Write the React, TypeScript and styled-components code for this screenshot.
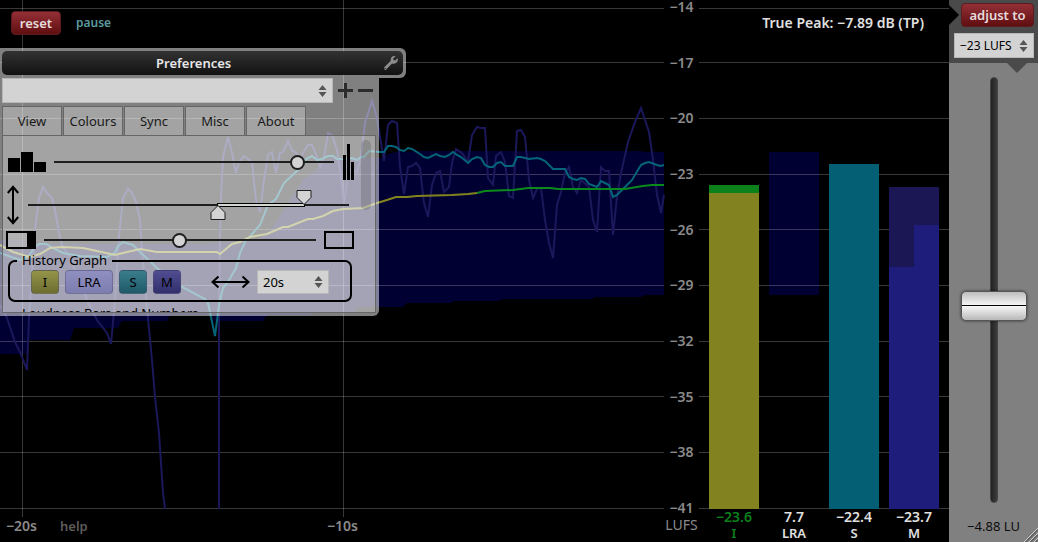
import React, { useState } from "react";
import styled, { createGlobalStyle } from "styled-components";

const GlobalStyle = createGlobalStyle`
  * { box-sizing: border-box; }
  body {
    margin: 0;
    background: #000;
    font-family: "Noto Sans", "Open Sans", sans-serif;
    font-size: 13px;
    line-height: 16px;
  }
  button, select, input { font: inherit; margin: 0; }
  svg { display: block; }
`;

const FOOTER = "33px";

const Window = styled.main`
  display: flex;
  height: 100vh;
  overflow: hidden;
  background: #000;
  color: #e0e0e0;
`;

const HistoryColumn = styled.section`
  position: relative;
  flex: 1;
  min-width: 0;
  display: flex;
  flex-direction: column;
`;

const PlotArea = styled.div`
  position: relative;
  flex: 1;
  min-height: 0;
  svg { width: 100%; height: 100%; overflow: visible; }
`;

const TimeAxis = styled.footer`
  height: ${FOOTER};
  display: grid;
  grid-template-columns: 54px 267px 1fr;
  align-items: center;
  padding-left: 6px;
  color: #8a8a8a;
  font-size: 14px;
  font-weight: 600;
`;

const HelpButton = styled.button`
  justify-self: start;
  border: 0;
  padding: 0;
  background: none;
  color: #5c5c5c;
  font-size: 13px;
  font-weight: 600;
`;

const AxisColumn = styled.section`
  width: 35px;
  display: flex;
  flex-direction: column;
  align-items: center;
  color: #8a8a8a;
  font-size: 14px;
`;

const Scale = styled.div`
  flex: 1;
  min-height: 0;
  margin-bottom: -6px;
  display: flex;
  flex-direction: column;
  justify-content: space-between;
  font-weight: 600;
  line-height: 14px;
`;

const Unit = styled.div`
  height: ${FOOTER};
  line-height: 32px;
`;

const MeterColumn = styled.section`
  position: relative;
  width: 250px;
  display: flex;
  flex-direction: column;
`;

const Readouts = styled.footer`
  height: ${FOOTER};
  display: flex;
  gap: 10px;
  padding: 0 10px;
`;

const Readout = styled.div<{ $color?: string }>`
  flex: 1;
  display: flex;
  flex-direction: column;
  align-items: center;
  font-weight: 600;
  color: ${(p) => p.$color ?? "#e0e0e0"};
`;

const Reading = styled.span`
  font-size: 14px;
`;

const TruePeak = styled.div`
  position: absolute;
  top: 15px;
  right: 25px;
  font-size: 14px;
  font-weight: 600;
  white-space: nowrap;
`;

const Toolbar = styled.div`
  position: absolute;
  z-index: 1;
  top: 11px;
  left: 11px;
  display: flex;
  align-items: center;
  gap: 15px;
`;

const RedButton = styled.button<{ $width: string }>`
  width: ${(p) => p.$width};
  height: 24px;
  padding: 0;
  border: 1px solid #5a1c1e;
  border-radius: 4px;
  background: linear-gradient(#933036, #600e11);
  color: #e6dcdc;
  font-weight: 600;
  line-height: 20px;
`;

const TextButton = styled.button`
  border: 0;
  padding: 0;
  background: none;
  color: #5b9a9e;
  font-size: 12px;
  font-weight: 600;
`;

/* Preferences window */

const Preferences = styled.aside`
  position: absolute;
  top: 48px;
  left: 0;
  color: #000;
`;

const TitleFrame = styled.div`
  width: 406px;
  padding: 3px 3px 3px 2px;
  border-radius: 0 6px 6px 0;
  background: rgba(255, 255, 255, 0.5);
`;

const TitleBar = styled.header`
  position: relative;
  height: 24px;
  display: flex;
  align-items: center;
  padding: 0 4px 0 154px;
  justify-content: space-between;
  border-radius: 5px;
  background: linear-gradient(rgba(48, 48, 48, 0.97), rgba(14, 14, 14, 0.97));
  color: #e6e6e6;
  font-weight: 600;
`;

const PrefsBody = styled.div`
  width: 379px;
  padding: 0 3px 3px 2px;
  border-radius: 0 0 6px 0;
  background: rgba(255, 255, 255, 0.5);
`;

const PresetRow = styled.div`
  display: flex;
  align-items: center;
  gap: 5px;
  height: 25px;
`;

const IconButton = styled.button`
  width: 15px;
  height: 15px;
  padding: 0;
  border: 0;
  background: none;
`;

const SelectBox = styled.span<{ $width: string; $height: string; $size?: string }>`
  position: relative;
  display: inline-block;
  width: ${(p) => p.$width};
  height: ${(p) => p.$height};
  font-size: ${(p) => p.$size ?? "13px"};
  select {
    appearance: none;
    display: block;
    width: 100%;
    height: 100%;
    padding: 0 5px;
    border: 1px solid #b8b8b8;
    border-radius: 0;
    background: #d3d3d3;
    color: #000;
  }
  svg {
    position: absolute;
    right: 6px;
    top: calc(50% - 6px);
    pointer-events: none;
  }
`;

const Tabs = styled.nav`
  display: flex;
  gap: 1px;
  margin-top: 3px;
`;

const Tab = styled.button`
  width: 60px;
  height: 29px;
  padding: 0;
  border: 1px solid #666;
  border-bottom: 0;
  background: rgba(255, 255, 255, 0.28);
  color: #1a1a1a;
`;

const Sheet = styled.div`
  height: 178px;
  display: flex;
  justify-content: space-between;
  align-items: flex-start;
  padding: 4px 4px 0 3px;
  overflow: hidden;
  border: 1px solid #666;
  background: rgba(255, 255, 255, 0.28);
`;

const Settings = styled.div`
  width: 348px;
  padding-top: 4px;
`;

const ScrollThumb = styled.div`
  width: 10px;
  height: 70px;
  border-radius: 5px;
  background: rgba(0, 0, 0, 0.14);
`;

const SliderRow = styled.div<{ $top: string; $inset: string }>`
  display: flex;
  align-items: center;
  gap: 8px;
  margin-top: ${(p) => p.$top};
  padding: ${(p) => p.$inset};
  svg { flex: none; }
`;

const Slider = styled.input`
  appearance: none;
  flex: 1;
  min-width: 0;
  height: 16px;
  background: linear-gradient(#1e1e1e, #1e1e1e) center / 100% 2px no-repeat;
  &::-webkit-slider-thumb {
    appearance: none;
    width: 15px;
    height: 15px;
    border: 2px solid #1e1e1e;
    border-radius: 50%;
    background: #d3d3d3;
  }
`;

const RangeBox = styled.div`
  display: grid;
  flex: 1;
  height: 32px;
  > * { grid-area: 1 / 1; }
`;

const GhostSlider = styled.input`
  width: 100%;
  opacity: 0;
`;

const Group = styled.fieldset`
  margin: 4px 2px 0;
  padding: 0;
  border: 2px solid #000;
  border-radius: 7px;
  legend {
    height: 16px;
    line-height: 14px;
    margin-left: 7px;
    padding: 0 5px;
  }
`;

const GroupRow = styled.div`
  display: flex;
  align-items: center;
  gap: 6px;
  padding: 1px 21px 6px;
  > svg { margin-left: 24px; }
`;

const Swatch = styled.button<{ $width: string; $from: string; $to: string }>`
  width: ${(p) => p.$width};
  height: 24px;
  padding: 0;
  border: 1px solid rgba(80, 80, 110, 0.45);
  border-radius: 4px;
  background: linear-gradient(${(p) => p.$from}, ${(p) => p.$to});
  color: #000;
`;

/* Gain sidebar */

const GainColumn = styled.aside`
  position: relative;
  width: 89px;
  display: flex;
  flex-direction: column;
  align-items: center;
  background: #808080;
  color: #0c0c0c;
`;

const TargetBox = styled.div`
  position: relative;
  width: 100%;
  height: 63px;
  display: flex;
  flex-direction: column;
  align-items: flex-end;
  gap: 6px;
  padding: 3px 4px 0 0;
  background: #4a4a4a;
  &::before, &::after {
    content: "";
    position: absolute;
    border: 10px solid transparent;
  }
  &::before { left: 0; top: 5px; border-left-color: #000; }
  &::after { right: 11px; top: 63px; border-top-color: #4a4a4a; }
`;

const Fader = styled.input`
  appearance: none;
  flex: 1;
  min-height: 0;
  width: 66px;
  margin: 14px 0 6px;
  writing-mode: vertical-lr;
  direction: rtl;
  background: none;
  &::-webkit-slider-runnable-track {
    width: 8px;
    height: 100%;
    border-radius: 4px;
    border: 1px solid #444;
    background: linear-gradient(90deg, #222, #3c3c3c);
  }
  &::-webkit-slider-thumb {
    appearance: none;
    width: 66px;
    height: 30px;
    margin-left: -30px;
    border: 1px solid #555;
    border-radius: 5px;
    background: linear-gradient(#bdbdbd, #f4f4f4 46%, #000 46%, #000 50%, #f8f8f8 50%, #b8b8b8);
    box-shadow: 0 0 3px rgba(0, 0, 0, 0.6);
  }
`;

const GainValue = styled.output`
  height: 33px;
  line-height: 35px;
`;

const Grip = styled.svg`
  position: absolute;
  right: 0;
  bottom: 0;
`;

const GRID = [8, 62, 118, 174, 229, 285, 341, 396, 452, 508];
const LABELS = [14, 17, 20, 23, 26, 29, 32, 35, 38, 41];

const RANGE =
  "0,240 25,240 30,244 200,244 258,240 271,230 288,203 303,180 313,173 322,163 330,158 383,158 388,154 395,152 420,151 640,151 646,152 664,152 " +
  "664,295 645,295 642,297 595,297 592,299 503,299 499,301 454,301 451,303 407,303 403,307 358,307 354,312 313,312 310,315 267,315 263,321 213,321 213,315 170,315 167,321 122,321 118,328 74,328 70,340 29,340 26,354 0,354";

const SHORT_TERM =
  "0,253 20,260 28,257 35,247 39,244 46,244 53,248 63,253 80,256 107,257 115,253 118,246 123,242 133,245 140,252 157,268 182,287 205,299 208,303 215,336 219,305 223,288 228,282 236,268 240,253 245,242 260,225 268,205 276,199 284,183 300,168 306,159 312,156 317,160 322,159 328,156 333,156 337,159 345,159 352,158 357,160 361,157 364,157 369,151 380,152 384,152 388,146 392,146 396,147 400,150 404,151 408,148 412,149 420,154 424,157 428,158 436,154 440,156 445,157 449,155 453,152 457,155 461,157 468,163 472,159 477,157 481,158 485,165 489,167 493,167 497,163 501,162 505,166 513,166 517,157 521,157 529,159 537,158 541,159 545,161 553,169 565,169 569,177 573,179 577,180 581,178 585,179 589,184 597,187 601,181 605,183 609,185 613,197 617,195 625,187 632,180 641,165 645,163 649,162 657,165 661,166 664,165";

const INTEGRATED =
  "0,245 13,252 30,257 40,254 50,248 62,247 83,248 97,251 115,255 127,252 140,249 157,252 217,252 220,254 232,244 240,242 250,237 267,234 283,227 288,227 308,219 313,219 323,216 333,211 343,209 363,208 377,203 387,200 396,197 407,197 417,196 452,195 468,194 477,193";

const ON_TARGET =
  "477,193 485,191 513,190 528,188 550,188 558,189 625,189 643,186 652,185 664,185";

const MOMENTARY =
  "0,305 7,318 15,342 20,352 27,370 29,317 35,230 39,198 43,187 47,193 52,198 55,210 59,233 62,245 70,258 82,287 88,302 97,320 107,333 111,344 115,300 119,237 123,198 128,189 132,193 136,202 140,220 142,250 147,308 152,360 155,397 159,433 161,463 163,493 165,509";

const MOMENTARY_RESUMED =
  "219,509 219,305 220,240 221,197 223,157 228,137 232,153 236,173 239,162 244,156 252,162 256,200 260,212 264,180 268,155 272,152 276,173 280,153 283,152 288,141 292,150 296,153 300,158 303,153 308,145 312,145 316,154 320,167 324,158 328,133 332,135 337,150 340,170 344,205 348,173 352,168 357,173 361,155 365,123 372,101 377,118 380,137 384,161 388,125 392,121 397,123 400,167 404,194 408,167 412,166 416,163 420,168 424,203 428,217 432,185 436,173 440,171 444,192 449,187 452,163 456,149 462,153 468,162 472,135 477,127 481,128 485,128 488,178 493,185 496,156 501,152 505,162 509,196 513,198 517,131 521,130 525,137 529,180 533,198 537,189 541,188 545,220 549,243 553,258 557,205 561,192 565,173 569,167 573,187 577,193 581,180 589,187 593,220 597,232 601,167 605,171 609,171 613,235 617,197 621,173 628,142 635,122 641,108 649,132 653,160 657,195 661,213 664,195";

const HistoryPlot = () => (
  <svg viewBox="0 0 664 509" preserveAspectRatio="none" aria-label="Loudness history">
    <polygon points={RANGE} fill="#000032" />
    <g fill="rgb(255,255,255)" fillOpacity="0.22">
      {GRID.map((y) => (
        <rect key={y} x="0" y={y} width="664" height="1" />
      ))}
      <rect x="22" y="0" width="1" height="517" />
      <rect x="343" y="0" width="1" height="517" />
    </g>
    <g fill="none" strokeWidth="2" strokeLinejoin="miter">
      <polyline points={MOMENTARY} stroke="#1b185c" />
      <polyline points={MOMENTARY_RESUMED} stroke="#1b185c" />
      <polyline points={SHORT_TERM} stroke="#04647a" />
      <polyline points={INTEGRATED} stroke="#84841f" />
      <polyline points={ON_TARGET} stroke="#0b8a1c" />
    </g>
  </svg>
);

const Meters = () => (
  <svg viewBox="0 0 250 509" preserveAspectRatio="none" aria-label="Loudness meters">
    <rect x="70" y="152" width="50" height="143" fill="#000032" />
    <g fill="rgb(255,255,255)" fillOpacity="0.22">
      {GRID.map((y) => (
        <rect key={y} x="0" y={y} width="250" height="1" />
      ))}
    </g>
    <rect x="10" y="185" width="50" height="8" fill="#0b801b" />
    <rect x="10" y="193" width="50" height="316" fill="#828220" />
    <rect x="130" y="164" width="50" height="345" fill="#045e74" />
    <rect x="190" y="187" width="50" height="322" fill="#1a1754" />
    <path d="M190 267H215V225H240V509H190Z" fill="#1f1d7b" />
  </svg>
);

const UpDown = () => (
  <svg width="9" height="12" viewBox="0 0 9 12" fill="#555">
    <path d="M4.5 0L8.5 5H.5ZM4.5 12L8.5 7H.5Z" />
  </svg>
);

const WrenchIcon = () => (
  <svg width="16" height="16" viewBox="0 0 16 16" fill="none">
    <path d="M1.5 14.5L2.6 15.2L9 8.6C11.600 9.400 14.500 8 15 4.500L14.600 3.200L12.200 5.500L10.600 5.100L10.200 3.500L12.500 1.200C10 .3 7.200 2.300 7.800 5.800L1.200 12.300Z" fill="#8c8c8c" />
    <circle cx="2.600" cy="13.500" r=".6" fill="#222" />
  </svg>
);

const RangeSlider = () => {
  const [low, setLow] = useState(190);
  const [high, setHigh] = useState(276);
  return (
    <RangeBox>
      <svg width="321" height="32" viewBox="0 0 321 32">
        <rect y="15" width="321" height="2" fill="#1e1e1e" />
        <rect x={low - 0.5} y="14.500" width={high - low + 1} height="3" fill="#d3d8d3" stroke="#000" />
        <path d={`M${low} 16.500L${low + 7} 23.500V30.500H${low - 7}V23.500Z`} fill="#d3d3d3" stroke="#1e1e1e" />
        <path d={`M${high} 15.500L${high - 7} 8.500V1.500H${high + 7}V8.500Z`} fill="#d3d3d3" stroke="#1e1e1e" />
      </svg>
      <GhostSlider type="range" aria-label="Lowest level" max={321} value={low} onChange={(e) => setLow(Math.min(+e.target.value, high))} />
      <GhostSlider type="range" aria-label="Highest level" max={321} value={high} onChange={(e) => setHigh(Math.max(+e.target.value, low))} />
    </RangeBox>
  );
};

const PreferencesWindow = () => (
  <Preferences>
    <TitleFrame>
      <TitleBar>
        Preferences
        <WrenchIcon />
      </TitleBar>
    </TitleFrame>
    <PrefsBody>
      <PresetRow>
        <SelectBox $width="331px" $height="25px">
          <select aria-label="Preset">
            <option></option>
          </select>
          <UpDown />
        </SelectBox>
        <IconButton aria-label="Add preset">
          <svg width="15" height="15" viewBox="0 0 15 15" fill="#2c2c2c">
            <path d="M6 0h3v6h6v3h-6v6h-3v-6h-6v-3h6z" />
          </svg>
        </IconButton>
        <IconButton aria-label="Remove preset">
          <svg width="15" height="15" viewBox="0 0 15 15" fill="#2c2c2c">
            <path d="M0 6h15v3h-15z" />
          </svg>
        </IconButton>
      </PresetRow>
      <Tabs>
        {["View", "Colours", "Sync", "Misc", "About"].map((t) => (
          <Tab key={t}>{t}</Tab>
        ))}
      </Tabs>
      <Sheet>
        <Settings>
          <SliderRow $top="0" $inset="0 0 0 2px">
            <svg width="38" height="20" viewBox="0 0 38 20">
              <path d="M0 6h12v14h-12zM13 0h12v20h-12zM26 10h12v10h-12z" />
            </svg>
            <Slider type="range" aria-label="Bar width" max={1000} defaultValue={890} />
            <svg width="12" height="36" viewBox="0 0 12 36">
              <path d="M1 11h3v25h-3zM5 0h3v36h-3zM9 18h3v18h-3z" />
            </svg>
          </SliderRow>
          <SliderRow $top="5px" $inset="0 5px 0 1px">
            <svg width="13" height="40" viewBox="0 0 13 40" fill="none" stroke="#000" strokeWidth="2">
              <path d="M6 1.500V38.500M.8 8L6 1.800L11.200 8M.8 32L6 38.200L11.200 32" />
            </svg>
            <RangeSlider />
          </SliderRow>
          <SliderRow $top="6px" $inset="0">
            <svg width="30" height="18" viewBox="0 0 30 18">
              <path d="M1 1h28v16h-28z" fill="#c0c0c0" fillOpacity=".5" stroke="#000" strokeWidth="2" />
              <path d="M21 0h9v18h-9z" />
            </svg>
            <Slider type="range" aria-label="Range shading" max={1000} defaultValue={499} />
            <svg width="30" height="18" viewBox="0 0 30 18">
              <path d="M1 1h28v16h-28z" fill="none" stroke="#000" strokeWidth="2" />
            </svg>
          </SliderRow>
          <Group>
            <legend>History Graph</legend>
            <GroupRow>
              <Swatch $width="28px" $from="#94944a" $to="#6d6d30">I</Swatch>
              <Swatch $width="48px" $from="#8f8fc0" $to="#7d7db0">LRA</Swatch>
              <Swatch $width="28px" $from="#3a7d8c" $to="#1f5968">S</Swatch>
              <Swatch $width="28px" $from="#504e92" $to="#322f6c">M</Swatch>
              <svg width="40" height="14" viewBox="0 0 40 14" fill="none" stroke="#000" strokeWidth="2">
                <path d="M1 7H38M7.500 1.500L1.500 7L7.500 12.500M31.500 1.500L37.500 7L31.500 12.500" />
              </svg>
              <SelectBox $width="72px" $height="24px">
                <select aria-label="History length">
                  <option>20s</option>
                </select>
                <UpDown />
              </SelectBox>
            </GroupRow>
          </Group>
          <Group>
            <legend>Loudness Bars and Numbers</legend>
          </Group>
        </Settings>
        <ScrollThumb />
      </Sheet>
    </PrefsBody>
  </Preferences>
);

export default function App() {
  return (
    <>
      <GlobalStyle />
      <Window>
        <HistoryColumn>
          <PlotArea>
            <HistoryPlot />
          </PlotArea>
          <TimeAxis>
            <span>−20s</span>
            <HelpButton>help</HelpButton>
            <span>−10s</span>
          </TimeAxis>
          <Toolbar>
            <RedButton $width="50px">reset</RedButton>
            <TextButton>pause</TextButton>
          </Toolbar>
          <PreferencesWindow />
        </HistoryColumn>
        <AxisColumn>
          <Scale>
            {LABELS.map((n) => (
              <span key={n}>−{n}</span>
            ))}
          </Scale>
          <Unit>LUFS</Unit>
        </AxisColumn>
        <MeterColumn>
          <PlotArea>
            <Meters />
          </PlotArea>
          <Readouts>
            <Readout $color="#0b801b">
              <Reading>−23.6</Reading>
              <span>I</span>
            </Readout>
            <Readout>
              <Reading>7.7</Reading>
              <span>LRA</span>
            </Readout>
            <Readout>
              <Reading>−22.4</Reading>
              <span>S</span>
            </Readout>
            <Readout>
              <Reading>−23.7</Reading>
              <span>M</span>
            </Readout>
          </Readouts>
          <TruePeak>True Peak: −7.89 dB (TP)</TruePeak>
        </MeterColumn>
        <GainColumn>
          <TargetBox>
            <RedButton $width="73px">adjust to</RedButton>
            <SelectBox $width="80px" $height="25px" $size="12px">
              <select aria-label="Target loudness">
                <option>−23 LUFS</option>
              </select>
              <UpDown />
            </SelectBox>
          </TargetBox>
          <Fader type="range" aria-label="Gain" max={1000} defaultValue={460} />
          <GainValue>−4.88 LU</GainValue>
          <Grip width="15" height="15" viewBox="0 0 15 15" fill="none">
            <path d="M1 15L15 1M6 15L15 6M11 15L15 11" stroke="#d0d0d0" />
            <path d="M2.500 15L15 2.500M7.500 15L15 7.500M12.500 15L15 12.500" stroke="#444" />
          </Grip>
        </GainColumn>
      </Window>
    </>
  );
}
